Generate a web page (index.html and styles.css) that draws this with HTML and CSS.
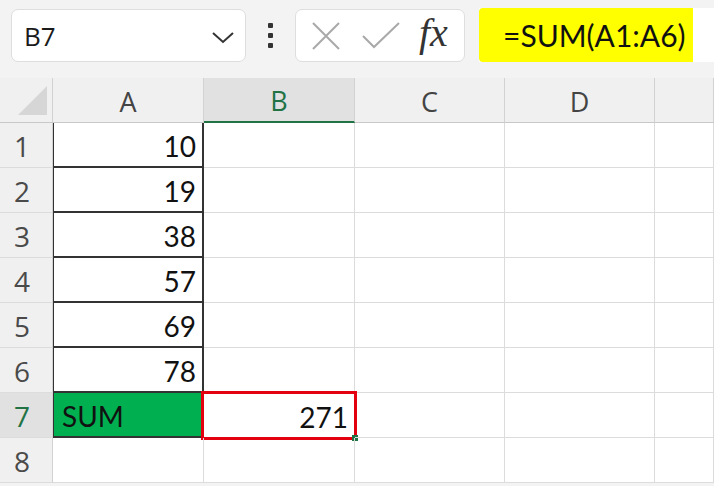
FILE: index.html
```html
<!DOCTYPE html>
<html>
<head>
<meta charset="utf-8">
<link rel="stylesheet" href="styles.css">
</head>
<body>
<div class="toolbar">
  <div class="namebox">
    <span class="name">B7</span>
    <svg class="chev" width="24" height="14" viewBox="0 0 24 14"><polyline points="2,2 12,11 22,2" fill="none" stroke="#333" stroke-width="2"/></svg>
  </div>
  <div class="dots"><i></i><i></i><i></i></div>
  <div class="btnbox">
    <svg class="ico" width="32" height="32" viewBox="0 0 32 32"><path d="M3 3 L29 29 M29 3 L3 29" stroke="#a9a9a9" stroke-width="2" fill="none"/></svg>
    <svg class="ico chk" width="40" height="32" viewBox="0 0 40 32"><polyline points="2,15 13,26 38,2" fill="none" stroke="#a9a9a9" stroke-width="2"/></svg>
    <span class="fx">fx</span>
  </div>
  <div class="formula"><span class="hl">=SUM(A1:A6)</span></div>
</div>
<div class="grid">
  <div class="corner"><svg width="53" height="45" viewBox="0 0 53 45"><polygon points="18,37 47,37 47,8" fill="#d6d6d6"/></svg></div>
  <div class="ch">A</div>
  <div class="ch sel">B</div>
  <div class="ch">C</div>
  <div class="ch">D</div>
  <div class="ch"></div>

  <div class="rh">1</div><div class="c num bx">10</div><div class="c"></div><div class="c"></div><div class="c"></div><div class="c"></div>
  <div class="rh">2</div><div class="c num bx">19</div><div class="c"></div><div class="c"></div><div class="c"></div><div class="c"></div>
  <div class="rh">3</div><div class="c num bx">38</div><div class="c"></div><div class="c"></div><div class="c"></div><div class="c"></div>
  <div class="rh">4</div><div class="c num bx">57</div><div class="c"></div><div class="c"></div><div class="c"></div><div class="c"></div>
  <div class="rh">5</div><div class="c num bx">69</div><div class="c"></div><div class="c"></div><div class="c"></div><div class="c"></div>
  <div class="rh">6</div><div class="c num bx">78</div><div class="c"></div><div class="c"></div><div class="c"></div><div class="c"></div>
  <div class="rh sel">7</div><div class="c bx green">SUM</div><div class="c num active">271<span class="redbox"></span><span class="handle"></span></div><div class="c"></div><div class="c"></div><div class="c"></div>
  <div class="rh">8</div><div class="c"></div><div class="c"></div><div class="c"></div><div class="c"></div><div class="c"></div>
</div>
</body>
</html>
```

FILE: styles.css
```css
* { box-sizing: border-box; }
html, body { margin: 0; padding: 0; }
body {
  width: 714px;
  height: 486px;
  overflow: hidden;
  background: #f3f3f3;
  font-family: "Open Sans", "Noto Sans", sans-serif;
}
.toolbar {
  display: flex;
  align-items: flex-start;
  height: 78px;
  padding: 9px 0 0 11px;
}
.namebox {
  width: 235px;
  height: 53px;
  background: #fff;
  border: 1px solid #dedede;
  border-radius: 7px;
  display: flex;
  align-items: center;
  justify-content: space-between;
  padding: 0 10px 0 12px;
}
.name {
  font-size: 26px;
  color: #1a1a1a;
  line-height: 1;
}
.chev { margin-top: 4px; }
.dots {
  width: 49px;
  height: 53px;
  display: flex;
  flex-direction: column;
  align-items: center;
  justify-content: center;
  gap: 5px;
}
.dots i {
  display: block;
  width: 5px;
  height: 5px;
  border-radius: 1px;
  background: #333;
}
.btnbox {
  width: 170px;
  height: 53px;
  background: #fff;
  border: 1px solid #dedede;
  border-radius: 7px;
  display: flex;
  align-items: center;
  padding-left: 14px;
}
.chk { margin-left: 19px; margin-top: 2px; }
.fx {
  font-family: "Liberation Serif", "DejaVu Serif", serif;
  font-style: italic;
  font-size: 40px;
  color: #333;
  margin-left: 18px;
  margin-top: -6px;
}
.formula {
  margin-left: 14px;
  flex: 1;
  height: 54px;
  margin-top: -1px;
  background: #fff;
  display: flex;
}
.hl {
  width: 214px;
  background: #ffff00;
  border-radius: 4px 0 0 4px;
  font-family: "Lato", sans-serif;
  font-size: 30px;
  color: #111;
  display: flex;
  align-items: center;
  padding-left: 24px;
}
.grid {
  display: grid;
  grid-template-columns: 53px 151px 151px 150px 150px 1fr;
  grid-auto-rows: 45px;
  background: #fff;
}
.corner, .ch, .rh {
  background: #f0f0f0;
  color: #444;
  border-right: 1px solid #d2d2d2;
  border-bottom: 1px solid #c8c8c8;
}
.ch {
  font-size: 27px;
  display: flex;
  align-items: center;
  justify-content: center;
  padding-top: 2px;
}
.ch.sel {
  background: #e1e1e1;
  color: #217346;
  border-bottom: 2px solid #217346;
}
.rh {
  font-size: 28px;
  color: #4a4a4a;
  display: flex;
  align-items: center;
  justify-content: center;
  padding-right: 8px;
  padding-top: 2px;
  border-bottom: 1px solid #dcdcdc;
}
.rh.sel {
  background: #e1e1e1;
  color: #217346;
}
.c {
  position: relative;
  border-right: 1px solid #dcdcdc;
  border-bottom: 1px solid #dcdcdc;
  font-family: "Lato", sans-serif;
  font-size: 28px;
  color: #111;
  display: flex;
  align-items: flex-end;
  padding: 0 6px 6px 6px;
  line-height: 1;
}
.num { justify-content: flex-end; }
.bx {
  border-left: 1px solid #333;
  border-right: 2px solid #333;
  border-bottom: 2px solid #333;
}
.green {
  background: #00b050;
  padding-left: 8px;
}
.redbox {
  position: absolute;
  left: -3px;
  top: -2px;
  right: -3px;
  bottom: -3px;
  border: 3px solid #e3000f;
}
.handle {
  position: absolute;
  right: -4px;
  bottom: -4px;
  width: 6px;
  height: 6px;
  background: #217346;
}
```
